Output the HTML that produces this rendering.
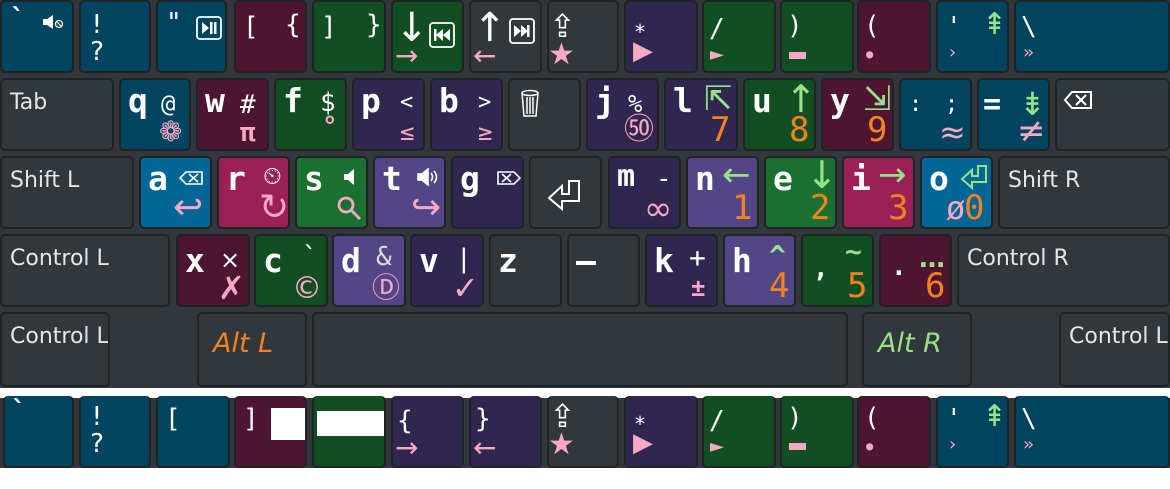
<!DOCTYPE html>
<html><head><meta charset="utf-8">
<style>
*{margin:0;padding:0}
body{width:1170px;height:489px;background:#fff;position:relative;overflow:hidden;font-family:"DejaVu Sans Mono","Liberation Mono",monospace;color:#fff}
.bg{position:absolute;left:0;top:0;width:1170px;height:388px;background:#32373b}
.bg2{position:absolute;left:0;top:398px;width:1170px;height:70px;background:#32373b}
.k{position:absolute;box-sizing:border-box;border:2px solid #1f2326;border-radius:5px;background:#32373b;overflow:hidden}
.k span{position:absolute;white-space:nowrap;line-height:1}
.B{background:#00445f}.M{background:#4d1530}.G{background:#114f22}.P{background:#302750}
.BB{background:#006696}.MM{background:#9a2055}.GG{background:#1a7030}.PP{background:#534687}
.m{font-size:33px;font-weight:bold;left:7px;top:4px}
.s{font-size:26px}
.ar{font-family:"DejaVu Sans",sans-serif}
.pk{color:#f7a8c4}.gr{color:#98e08a}.or{color:#f58220}
.d{font-size:34px;left:44px;top:33px;color:#f58220}
.lab{font-family:"DejaVu Sans","Liberation Sans",sans-serif;font-size:22px;color:#e6e6e6;left:8px;top:12px}
.alt{font-family:"DejaVu Sans","Liberation Sans",sans-serif;font-style:italic;font-size:27px;top:16px}
</style></head><body>
<div class="bg"></div>
<div class="bg2"></div>

<!-- Row 1 -->
<div class="k B" style="left:0;top:0;width:74px;height:73px"><span class="s" style="left:8px;top:4px;font-weight:bold">`</span>
<svg style="position:absolute;left:40px;top:12px" width="22" height="16"><path d="M1 5h4l6-4v14l-6-4H1z" fill="#fff"/><circle cx="17" cy="10" r="3.5" fill="none" stroke="#fff" stroke-width="1.3"/><path d="M15 8l4 4" stroke="#fff"/></svg></div>
<div class="k B" style="left:79px;top:0;width:72px;height:73px"><span class="s" style="left:8px;top:10px">!</span><span class="s" style="left:8px;top:37px">?</span></div>
<div class="k B" style="left:156px;top:0;width:71px;height:73px"><span class="s" style="left:8px;top:8px">"</span>
<svg style="position:absolute;left:38px;top:14px" width="26" height="24"><rect x="1" y="1" width="24" height="22" rx="3" fill="none" stroke="#fff" stroke-width="1.8"/><path d="M6 6l7 6-7 6z" fill="#fff"/><rect x="14" y="6" width="2.5" height="12" fill="#fff"/><rect x="18" y="6" width="2.5" height="12" fill="#fff"/></svg></div>
<div class="k M" style="left:234px;top:0;width:73px;height:73px"><span class="s" style="left:7px;top:12px">[</span><span class="s" style="left:49px;top:10px">{</span></div>
<div class="k G" style="left:312px;top:0;width:74px;height:73px"><span class="s" style="left:7px;top:12px">]</span><span class="s" style="left:52px;top:10px">}</span></div>
<div class="k G" style="left:391px;top:0;width:73px;height:73px"><span class="ar" style="left:2px;top:6px;font-size:40px">↓</span><span class="pk ar" style="left:2px;top:40px;font-size:28px">→</span>
<svg style="position:absolute;left:36px;top:20px" width="26" height="26"><rect x="1" y="1" width="24" height="24" rx="3" fill="none" stroke="#fff" stroke-width="1.8"/><rect x="5" y="7" width="2.5" height="12" fill="#fff"/><path d="M7 13l7-6v12zM14 13l7-6v12z" fill="#fff"/></svg></div>
<div class="k" style="left:469px;top:0;width:73px;height:73px"><span class="ar" style="left:2px;top:6px;font-size:40px">↑</span><span class="pk ar" style="left:2px;top:40px;font-size:28px">←</span>
<svg style="position:absolute;left:38px;top:16px" width="26" height="26"><rect x="1" y="1" width="24" height="24" rx="3" fill="none" stroke="#fff" stroke-width="1.8"/><rect x="18" y="7" width="2.5" height="12" fill="#fff"/><path d="M5 7l7 6-7 6zM12 7l7 6-7 6z" fill="#fff"/></svg></div>
<div class="k" style="left:547px;top:0;width:72px;height:73px"><span class="ar" style="left:0px;top:8px;font-size:32px">⇪</span><span class="pk ar" style="left:-1px;top:38px;font-size:30px">★</span></div>
<div class="k P" style="left:624px;top:0;width:74px;height:73px"><span style="left:8px;top:20px;font-size:20px">*</span><span class="pk ar" style="left:7px;top:36px;font-size:26px">▶</span></div>
<div class="k G" style="left:702px;top:0;width:74px;height:73px"><span class="s" style="left:5px;top:14px">/</span><span class="pk ar" style="left:6px;top:44px;font-size:18px">►</span></div>
<div class="k G" style="left:780px;top:0;width:74px;height:73px"><span class="s" style="left:5px;top:11px">)</span><span style="left:7px;top:50px;width:17px;height:7px;background:#f7a8c4"></span></div>
<div class="k M" style="left:857px;top:0;width:74px;height:73px"><span class="s" style="left:5px;top:11px">(</span><span class="pk" style="left:7px;top:46px;font-size:12px">●</span></div>
<div class="k B" style="left:936px;top:0;width:73px;height:73px"><span class="s" style="left:8px;top:12px">'</span><span class="gr ar" style="left:44px;top:8px;font-size:30px">⇞</span><span class="pk" style="left:9px;top:42px;font-size:18px">›</span></div>
<div class="k B" style="left:1014px;top:0;width:156px;height:73px"><span class="s" style="left:5px;top:12px">\</span><span class="pk" style="left:7px;top:42px;font-size:18px">»</span></div>

<!-- Row 2 -->
<div class="k" style="left:0;top:78px;width:114px;height:73px"><span class="lab">Tab</span></div>
<div class="k B" style="left:119px;top:78px;width:72px;height:73px"><span class="m">q</span><span class="s" style="left:40px;top:12px;font-size:24px">@</span><span class="pk ar" style="left:38px;top:38px;font-size:28px">❁</span></div>
<div class="k M" style="left:196px;top:78px;width:73px;height:73px"><span class="m">w</span><span class="s" style="left:42px;top:12px">#</span><span class="pk" style="left:42px;top:40px;font-size:26px;font-weight:bold">π</span></div>
<div class="k G" style="left:274px;top:78px;width:73px;height:73px"><span class="m">f</span><span class="s" style="left:44px;top:10px">$</span><span class="pk" style="left:46px;top:34px;font-size:26px;font-weight:bold">°</span></div>
<div class="k P" style="left:352px;top:78px;width:73px;height:73px"><span class="m">p</span><span class="s" style="left:46px;top:12px;font-size:22px">&lt;</span><span class="pk" style="left:46px;top:40px;font-size:24px">≤</span></div>
<div class="k P" style="left:430px;top:78px;width:73px;height:73px"><span class="m">b</span><span class="s" style="left:46px;top:12px;font-size:22px">&gt;</span><span class="pk" style="left:46px;top:40px;font-size:24px">≥</span></div>
<div class="k" style="left:508px;top:78px;width:73px;height:73px">
<svg style="position:absolute;left:10px;top:9px" width="20" height="30" fill="none" stroke="#fff" stroke-width="1.5"><ellipse cx="10" cy="4" rx="8" ry="2.5"/><path d="M2 4l2 23h12l2-23M7 8v17M10 8v17M13 8v17"/></svg></div>
<div class="k P" style="left:586px;top:78px;width:73px;height:73px"><span class="m">j</span><span class="s" style="left:40px;top:12px;font-size:24px">%</span><span class="pk ar" style="left:36px;top:35px;font-size:30px">㊿</span></div>
<div class="k P" style="left:664px;top:78px;width:74px;height:73px"><span class="m">l</span><span class="gr ar" style="left:38px;top:2px;font-size:34px">⇱</span><span class="d">7</span></div>
<div class="k G" style="left:743px;top:78px;width:73px;height:73px"><span class="m">u</span><span class="gr ar" style="left:40px;top:0px;font-size:38px">↑</span><span class="d">8</span></div>
<div class="k M" style="left:821px;top:78px;width:73px;height:73px"><span class="m">y</span><span class="gr ar" style="left:40px;top:2px;font-size:34px">⇲</span><span class="d">9</span></div>
<div class="k B" style="left:899px;top:78px;width:73px;height:73px"><span class="s" style="left:8px;top:14px;font-size:22px">:</span><span class="s" style="left:44px;top:14px;font-size:22px">;</span><span class="pk ar" style="left:38px;top:36px;font-size:32px">≈</span></div>
<div class="k B" style="left:977px;top:78px;width:73px;height:73px"><span style="left:4px;top:10px;font-size:30px;font-weight:bold">=</span><span class="gr ar" style="left:40px;top:8px;font-size:32px">⇟</span><span class="pk ar" style="left:38px;top:34px;font-size:34px">≠</span></div>
<div class="k" style="left:1055px;top:78px;width:115px;height:73px">
<svg style="position:absolute;left:6px;top:10px" width="30" height="20" fill="none" stroke="#fff" stroke-width="2"><path d="M9 2h19v16H9L2 10z M13 5l10 10M23 5L13 15"/></svg></div>

<!-- Row 3 -->
<div class="k" style="left:0;top:156px;width:134px;height:73px"><span class="lab">Shift L</span></div>
<div class="k BB" style="left:139px;top:156px;width:73px;height:73px"><span class="m">a</span>
<svg style="position:absolute;left:38px;top:12px" width="24" height="16" fill="none" stroke="#fff" stroke-width="1.6"><path d="M7 2h16v12H7L1 8z M10 4l9 8M19 4l-9 8"/></svg><span class="pk ar" style="left:32px;top:32px;font-size:36px">↩</span></div>
<div class="k MM" style="left:217px;top:156px;width:73px;height:73px"><span class="m">r</span><span class="ar" style="left:44px;top:6px;font-size:24px">⏲</span><span class="pk ar" style="left:40px;top:32px;font-size:36px">↻</span></div>
<div class="k GG" style="left:295px;top:156px;width:73px;height:73px"><span class="m">s</span>
<svg style="position:absolute;left:46px;top:10px" width="16" height="18"><path d="M1 6h4l6-5v16l-6-5H1z" fill="#fff"/></svg>
<svg style="position:absolute;left:40px;top:38px" width="26" height="26" fill="none" stroke="#f7a8c4" stroke-width="2.8"><circle cx="9" cy="9" r="7"/><path d="M14 14l9 9"/></svg></div>
<div class="k PP" style="left:373px;top:156px;width:73px;height:73px"><span class="m">t</span>
<svg style="position:absolute;left:42px;top:10px" width="24" height="18" fill="none" stroke="#fff" stroke-width="1.6"><path d="M1 6h4l6-5v16l-6-5H1z" fill="#fff"/><path d="M14 5q3 4 0 8M17 3q5 6 0 12"/></svg><span class="pk ar" style="left:36px;top:32px;font-size:36px">↪</span></div>
<div class="k P" style="left:451px;top:156px;width:73px;height:73px"><span class="m">g</span>
<svg style="position:absolute;left:44px;top:12px" width="24" height="16" fill="none" stroke="#fff" stroke-width="1.6"><path d="M1 2h16l6 6-6 6H1z M5 4l9 8M14 4l-9 8"/></svg></div>
<div class="k" style="left:529px;top:156px;width:73px;height:73px">
<svg style="position:absolute;left:16px;top:20px" width="36" height="36" fill="none" stroke="#fff" stroke-width="2"><path d="M22 3h10v20H15v8L2 20l13-12v8h7z"/></svg></div>
<div class="k P" style="left:608px;top:156px;width:73px;height:73px"><span class="m" style="font-size:30px">m</span><span class="s" style="left:46px;top:8px">-</span><span class="pk ar" style="left:34px;top:34px;font-size:34px">∞</span></div>
<div class="k PP" style="left:686px;top:156px;width:73px;height:73px"><span class="m">n</span><span class="gr ar" style="left:34px;top:0px;font-size:34px">←</span><span class="d">1</span></div>
<div class="k GG" style="left:764px;top:156px;width:73px;height:73px"><span class="m">e</span><span class="gr ar" style="left:40px;top:-2px;font-size:38px">↓</span><span class="d">2</span></div>
<div class="k MM" style="left:842px;top:156px;width:73px;height:73px"><span class="m">i</span><span class="gr ar" style="left:34px;top:0px;font-size:34px">→</span><span class="d">3</span></div>
<div class="k BB" style="left:920px;top:156px;width:73px;height:73px"><span class="m">o</span>
<svg style="position:absolute;left:38px;top:6px" width="30" height="28" fill="none" stroke="#98e08a" stroke-width="2"><path d="M18 2h8v16H12v6L2 15l10-9v6h6z"/></svg><span class="pk" style="left:24px;top:34px;font-size:32px">ø</span><span class="d" style="left:42px">0</span></div>
<div class="k" style="left:998px;top:156px;width:172px;height:73px"><span class="lab">Shift R</span></div>

<!-- Row 4 -->
<div class="k" style="left:0;top:234px;width:170px;height:73px"><span class="lab">Control L</span></div>
<div class="k M" style="left:176px;top:234px;width:74px;height:73px"><span class="m" style="top:8px">x</span><span class="ar" style="left:42px;top:12px;font-size:24px">×</span><span class="pk ar" style="left:40px;top:36px;font-size:32px">✗</span></div>
<div class="k G" style="left:254px;top:234px;width:74px;height:73px"><span class="m" style="top:8px">c</span><span class="s" style="left:46px;top:8px">`</span><span class="pk ar" style="left:36px;top:38px;font-size:30px">©</span></div>
<div class="k PP" style="left:332px;top:234px;width:74px;height:73px"><span class="m" style="top:8px">d</span><span style="left:42px;top:8px;font-size:26px;color:#ddd">&amp;</span><span class="pk ar" style="left:38px;top:38px;font-size:28px">Ⓓ</span></div>
<div class="k P" style="left:410px;top:234px;width:74px;height:73px"><span class="m" style="top:8px">v</span><span class="s" style="left:44px;top:10px">|</span><span class="pk ar" style="left:40px;top:36px;font-size:32px">✓</span></div>
<div class="k" style="left:489px;top:234px;width:73px;height:73px"><span class="m" style="top:8px">z</span></div>
<div class="k" style="left:567px;top:234px;width:73px;height:73px"><span class="m" style="top:8px">—</span></div>
<div class="k P" style="left:645px;top:234px;width:73px;height:73px"><span class="m" style="top:8px">k</span><span style="left:42px;top:8px;font-size:28px">+</span><span class="pk" style="left:44px;top:40px;font-size:24px;font-weight:bold">±</span></div>
<div class="k PP" style="left:723px;top:234px;width:73px;height:73px"><span class="m" style="top:8px">h</span><span class="gr" style="left:44px;top:6px;font-size:28px;font-weight:bold">^</span><span class="d">4</span></div>
<div class="k G" style="left:801px;top:234px;width:73px;height:73px"><span class="s" style="left:10px;top:20px;font-weight:bold">,</span><span class="gr" style="left:42px;top:2px;font-size:28px;font-weight:bold">~</span><span class="d">5</span></div>
<div class="k M" style="left:879px;top:234px;width:73px;height:73px"><span class="s" style="left:10px;top:18px;font-weight:bold">.</span><span class="gr ar" style="left:38px;top:10px;font-size:26px;font-weight:bold">…</span><span class="d">6</span></div>
<div class="k" style="left:957px;top:234px;width:213px;height:73px"><span class="lab">Control R</span></div>

<!-- Row 5 -->
<div class="k" style="left:0;top:312px;width:110px;height:75px"><span class="lab">Control L</span></div>
<div class="k" style="left:197px;top:312px;width:110px;height:75px"><span class="alt or" style="left:14px">Alt L</span></div>
<div class="k" style="left:312px;top:312px;width:536px;height:75px"></div>
<div class="k" style="left:862px;top:312px;width:110px;height:75px"><span class="alt gr" style="left:14px">Alt R</span></div>
<div class="k" style="left:1059px;top:312px;width:111px;height:75px"><span class="lab">Control L</span></div>

<!-- Strip -->
<div class="k B" style="left:3px;top:396px;width:71px;height:72px;border-top:none"><span class="s" style="left:6px;top:2px;font-weight:bold">`</span></div>
<div class="k B" style="left:79px;top:396px;width:72px;height:72px;border-top:none"><span class="s" style="left:8px;top:8px">!</span><span class="s" style="left:8px;top:35px">?</span></div>
<div class="k B" style="left:156px;top:396px;width:74px;height:72px;border-top:none"><span class="s" style="left:7px;top:10px">[</span></div>
<div class="k M" style="left:234px;top:396px;width:73px;height:72px;border-top:none"><span class="s" style="left:7px;top:10px">]</span><span style="left:35px;top:12px;width:37px;height:32px;background:#fff"></span></div>
<div class="k G" style="left:312px;top:396px;width:74px;height:72px;border-top:none"><span style="left:3px;top:15px;width:68px;height:25px;background:#fff"></span></div>
<div class="k P" style="left:391px;top:396px;width:73px;height:72px;border-top:none"><span class="s" style="left:4px;top:12px">{</span><span class="pk ar" style="left:2px;top:38px;font-size:28px">→</span></div>
<div class="k P" style="left:469px;top:396px;width:73px;height:72px;border-top:none"><span class="s" style="left:4px;top:10px">}</span><span class="pk ar" style="left:2px;top:38px;font-size:28px">←</span></div>
<div class="k" style="left:547px;top:396px;width:72px;height:72px;border-top:none"><span class="ar" style="left:0px;top:4px;font-size:32px">⇪</span><span class="pk ar" style="left:-1px;top:34px;font-size:30px">★</span></div>
<div class="k P" style="left:624px;top:396px;width:74px;height:72px;border-top:none"><span style="left:8px;top:18px;font-size:20px">*</span><span class="pk ar" style="left:7px;top:34px;font-size:26px">▶</span></div>
<div class="k G" style="left:702px;top:396px;width:74px;height:72px;border-top:none"><span class="s" style="left:5px;top:12px">/</span><span class="pk ar" style="left:6px;top:42px;font-size:18px">►</span></div>
<div class="k G" style="left:780px;top:396px;width:74px;height:72px;border-top:none"><span class="s" style="left:5px;top:9px">)</span><span style="left:7px;top:47px;width:17px;height:7px;background:#f7a8c4"></span></div>
<div class="k M" style="left:857px;top:396px;width:74px;height:72px;border-top:none"><span class="s" style="left:5px;top:9px">(</span><span class="pk" style="left:7px;top:44px;font-size:12px">●</span></div>
<div class="k B" style="left:936px;top:396px;width:73px;height:72px;border-top:none"><span class="s" style="left:8px;top:10px">'</span><span class="gr ar" style="left:44px;top:6px;font-size:30px">⇞</span><span class="pk" style="left:9px;top:40px;font-size:18px">›</span></div>
<div class="k B" style="left:1014px;top:396px;width:156px;height:72px;border-top:none"><span class="s" style="left:5px;top:10px">\</span><span class="pk" style="left:7px;top:40px;font-size:18px">»</span></div>
</body></html>
